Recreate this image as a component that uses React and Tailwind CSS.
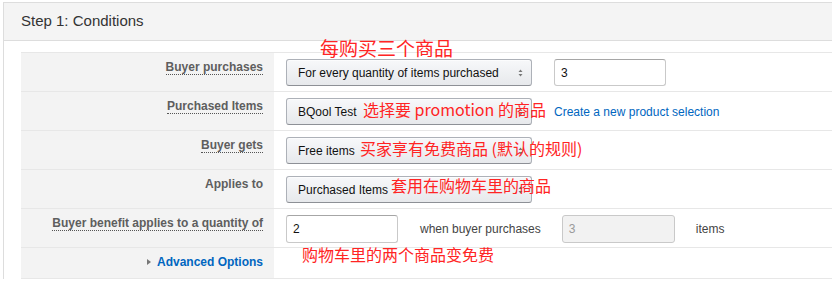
import React from "react";

const Arrows = () => (
  <svg width="5" height="8" viewBox="0 0 5 8" className="shrink-0">
    <polygon points="0.5,3 2.5,0.5 4.5,3" fill="#777" />
    <polygon points="0.5,5 2.5,7.5 4.5,5" fill="#777" />
  </svg>
);

const Select = ({ children }) => (
  <div className="flex h-[27px] w-[246px] items-center justify-between rounded-[3px] border border-[#adb1b8] border-b-[#8d9096] bg-gradient-to-b from-[#f7f8fa] to-[#e7e9ec] pl-[11px] pr-[8px] text-[12px] text-[#111] shadow-[inset_0_1px_0_rgba(255,255,255,0.6)]">
    <span>{children}</span>
    <Arrows />
  </div>
);

const Input = ({ value, w = "w-[112px]", h = "h-[27px]", disabled }) => (
  <div
    className={`flex ${h} ${w} items-center rounded-[3px] border border-[#c9c9c9] border-t-[#a6a6a6] pl-[6px] text-[12px] ${
      disabled ? "bg-[#f2f2f2] text-[#9a9a9a] border-t-[#c9c9c9]" : "bg-white text-[#111]"
    }`}
  >
    {value}
  </div>
);

const Label = ({ children, dotted = true }) => (
  <div className="w-[253px] shrink-0 bg-[#f3f3f3] pr-[11px] pt-[6px] text-right text-[12px] font-bold leading-[16px] text-[#5e5e5e]">
    {dotted ? (
      <span className="border-b border-dotted border-[#555]">{children}</span>
    ) : (
      <span>{children}</span>
    )}
  </div>
);

const Row = ({ label, dotted, children, h = "h-[39px]" }) => (
  <div className={`flex ${h} border-b border-[#e7e7e7]`}>
    <Label dotted={dotted}>{label}</Label>
    <div className="flex flex-1 items-start pl-[12px] pt-[6px]">{children}</div>
  </div>
);

export default function App() {
  return (
    <div className="relative h-[281px] w-[832px] overflow-hidden bg-white font-['Liberation_Sans',Arial,sans-serif]">
      <div className="ml-[3px] mt-[2px] w-[840px] border-l border-t border-[#dddddd]">
        <div className="flex h-[38px] items-center border-b border-[#dddddd] bg-[#f4f4f4] pl-[17px] text-[15px] text-[#333]">
          Step 1: Conditions
        </div>
        <div className="pl-[17px] pt-[11px]">
          <div className="border-t border-[#e7e7e7]">
            <Row label="Buyer purchases">
              <Select>For every quantity of items purchased</Select>
              <div className="ml-[22px]">
                <Input value="3" />
              </div>
            </Row>
            <Row label="Purchased Items">
              <Select>BQool Test</Select>
              <div className="ml-[22px] flex h-[27px] items-center text-[12px] text-[#0066c0]">
                Create a new product selection
              </div>
            </Row>
            <Row label="Buyer gets">
              <Select>Free items</Select>
            </Row>
            <Row label="Applies to" dotted={false}>
              <Select>Purchased Items</Select>
            </Row>
            <Row label="Buyer benefit applies to a quantity of">
              <Input value="2" h="h-[28px]" />
              <div className="ml-[22px] flex h-[28px] items-center text-[12px] text-[#444]">
                when buyer purchases
              </div>
              <div className="ml-[21px]">
                <Input value="3" w="w-[113px]" h="h-[28px]" disabled />
              </div>
              <div className="ml-[21px] flex h-[28px] items-center text-[12px] text-[#444]">
                items
              </div>
            </Row>
            <div className="flex h-[31px] border-b border-[#e7e7e7]">
              <div className="flex w-[253px] shrink-0 justify-end bg-[#f3f3f3] pr-[11px] pt-[6px] text-[12px] font-bold leading-[16px] text-[#0066c0]">
                <span className="mr-[6px] mt-[5px] h-0 w-0 border-y-[3px] border-l-[4px] border-y-transparent border-l-[#777]" />
                <span>Advanced Options</span>
              </div>
              <div className="flex-1" />
            </div>
          </div>
        </div>
      </div>

      <div className="pointer-events-none absolute left-[320px] top-[38px] whitespace-nowrap font-['Noto_Sans_CJK_SC',sans-serif] text-[19px] leading-[19px] text-[#ff2424]">
        每购买三个商品
      </div>
      <div className="pointer-events-none absolute left-[363px] top-[101px] whitespace-nowrap font-['Noto_Sans_CJK_SC',sans-serif] text-[16px] leading-[16px] text-[#ff2424]">
        选择要 promotion 的商品
      </div>
      <div className="pointer-events-none absolute left-[360px] top-[140px] whitespace-nowrap font-['Noto_Sans_CJK_SC',sans-serif] text-[16px] leading-[16px] text-[#ff2424]">
        买家享有免费商品 (默认的规则)
      </div>
      <div className="pointer-events-none absolute left-[391px] top-[177px] whitespace-nowrap font-['Noto_Sans_CJK_SC',sans-serif] text-[16px] leading-[16px] text-[#ff2424]">
        套用在购物车里的商品
      </div>
      <div className="pointer-events-none absolute left-[302px] top-[246px] whitespace-nowrap font-['Noto_Sans_CJK_SC',sans-serif] text-[16px] leading-[16px] text-[#ff2424]">
        购物车里的两个商品变免费
      </div>
    </div>
  );
}
